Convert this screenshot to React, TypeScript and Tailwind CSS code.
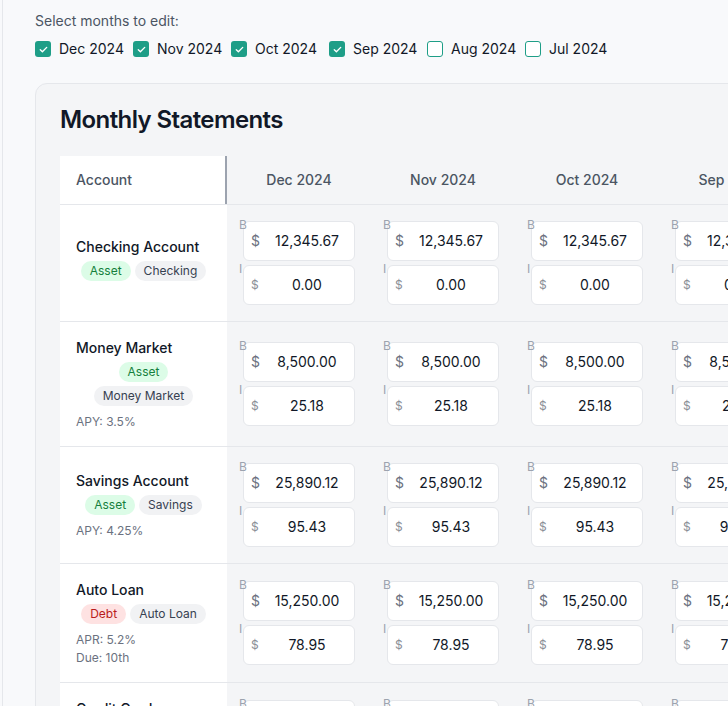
import React from "react";

type Acc = {
  name: string;
  kind: "Asset" | "Debt";
  type: string;
  meta: string[];
  bal: string;
  int: string;
};

const accounts: Acc[] = [
  { name: "Checking Account", kind: "Asset", type: "Checking", meta: [], bal: "12,345.67", int: "0.00" },
  { name: "Money Market", kind: "Asset", type: "Money Market", meta: ["APY: 3.5%"], bal: "8,500.00", int: "25.18" },
  { name: "Savings Account", kind: "Asset", type: "Savings", meta: ["APY: 4.25%"], bal: "25,890.12", int: "95.43" },
  { name: "Auto Loan", kind: "Debt", type: "Auto Loan", meta: ["APR: 5.2%", "Due: 10th"], bal: "15,250.00", int: "78.95" },
  { name: "Credit Card", kind: "Debt", type: "Credit Card", meta: ["APR: 22.9%", "Due: 15th"], bal: "2,450.00", int: "45.00" },
];

const allMonths = [
  { label: "Dec 2024", checked: true },
  { label: "Nov 2024", checked: true },
  { label: "Oct 2024", checked: true },
  { label: "Sep 2024", checked: true },
  { label: "Aug 2024", checked: false },
  { label: "Jul 2024", checked: false },
];

const months = allMonths.filter((m) => m.checked).map((m) => m.label);

function Check({ checked }: { checked: boolean }) {
  if (checked) {
    return (
      <span className="flex h-4 w-4 shrink-0 items-center justify-center rounded-[3px] bg-[#1e9e87]">
        <svg width="11" height="11" viewBox="0 0 12 12" fill="none">
          <path d="M2.5 6.2l2.3 2.3 4.7-4.8" stroke="white" strokeWidth="1.5" strokeLinecap="round" strokeLinejoin="round" />
        </svg>
      </span>
    );
  }
  return <span className="block h-4 w-4 shrink-0 rounded-[3px] border-[1.5px] border-[#1e9e87] bg-white" />;
}

function MoneyInput({ label, value, big }: { label: string; value: string; big: boolean }) {
  return (
    <div className="relative h-10 w-[112px] rounded-md border border-[#e5e7eb] bg-white">
      <span className="absolute left-[-5px] top-[-5px] z-10 text-xs leading-4 text-[#9ca3af]">{label}</span>
      <span
        className={
          big
            ? "absolute left-[7px] top-1/2 -translate-y-1/2 text-sm text-[#6b7280]"
            : "absolute left-[7px] top-1/2 -translate-y-1/2 text-xs text-[#8b8f97]"
        }
      >
        $
      </span>
      <div className="flex h-full items-center justify-center pl-6 pr-2 text-sm text-[#111827]">{value}</div>
    </div>
  );
}

export default function App() {
  return (
    <div
      className="h-[706px] w-[728px] overflow-hidden bg-[#f8f9fb]"
      style={{ fontFamily: "Inter, 'Noto Sans', sans-serif" }}
    >
      <div className="ml-[2px] h-full border-l border-[#e5e7eb] pl-[32px] pt-[11px]">
        <div className="text-sm leading-5 text-[#4b5563]">Select months to edit:</div>
        <div className="mt-[8px] flex items-center gap-[9px]">
          {allMonths.map((m) => (
            <label key={m.label} className="flex h-5 w-[89px] items-center gap-2 whitespace-nowrap text-sm text-[#111827]">
              <Check checked={m.checked} />
              <span>{m.label}</span>
            </label>
          ))}
        </div>
        <div className="mt-[24px] w-[900px] rounded-xl border border-[#e5e7eb] bg-[#f4f5f7] px-6 pt-5">
          <h2 className="text-2xl font-semibold leading-8 tracking-tight text-[#111827]">Monthly Statements</h2>
          <div className="mt-5">
            <div className="flex h-[49px] border-b border-[#e5e7eb]">
              <div className="flex w-[167px] shrink-0 items-center border-r-2 border-[#9ca3af] bg-white pl-4 text-sm font-medium text-[#4b5563]">
                Account
              </div>
              {months.map((m) => (
                <div key={m} className="flex w-[144px] shrink-0 items-center justify-center text-sm font-medium text-[#4b5563]">
                  {m}
                </div>
              ))}
            </div>
            {accounts.map((a) => (
              <div key={a.name} className="flex border-b border-[#e5e7eb]">
                <div className="flex w-[167px] shrink-0 flex-col justify-center bg-white px-4 py-4">
                  <div className="text-sm font-medium leading-5 text-[#111827]">{a.name}</div>
                  <div className="mt-1 flex flex-wrap justify-center gap-1">
                    <span
                      className={
                        a.kind === "Asset"
                          ? "rounded-full bg-[#dcfce7] px-[9px] text-xs leading-5 text-[#15803d]"
                          : "rounded-full bg-[#fee2e2] px-[9px] text-xs leading-5 text-[#b91c1c]"
                      }
                    >
                      {a.kind}
                    </span>
                    <span className="rounded-full bg-[#f1f2f4] px-[9px] text-xs leading-5 text-[#374151]">{a.type}</span>
                  </div>
                  <div className="mt-2 flex flex-col gap-0.5">
                    {a.meta.map((t) => (
                      <div key={t} className="text-xs leading-4 text-[#6b7280]">
                        {t}
                      </div>
                    ))}
                  </div>
                </div>
                {months.map((m) => (
                  <div key={m} className="flex w-[144px] shrink-0 flex-col items-center justify-center gap-1 py-4">
                    <MoneyInput label="B" value={a.bal} big />
                    <MoneyInput label="I" value={a.int} big={false} />
                  </div>
                ))}
              </div>
            ))}
          </div>
        </div>
      </div>
    </div>
  );
}
